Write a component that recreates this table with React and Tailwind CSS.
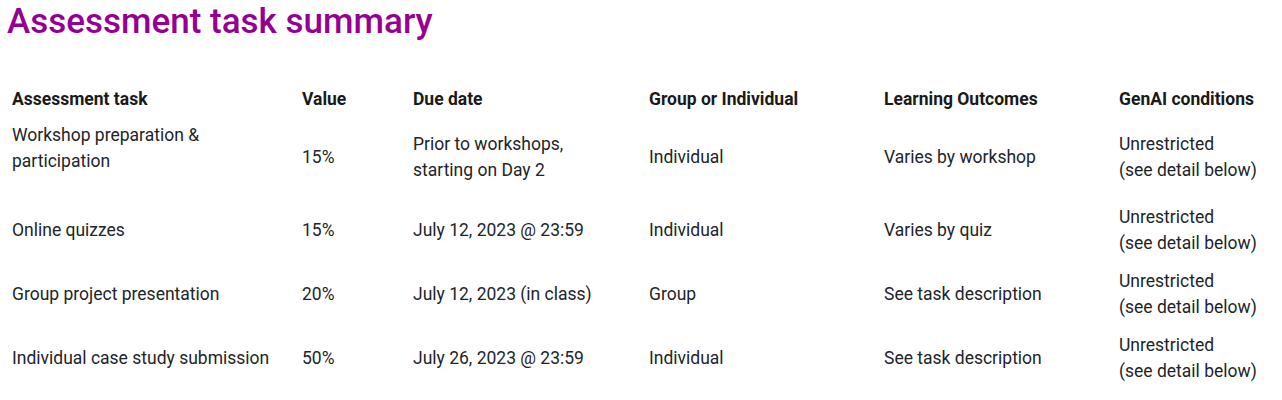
const rows = [
  {
    task: "Workshop preparation & participation",
    value: "15%",
    due: "Prior to workshops, starting on Day 2",
    type: "Individual",
    outcomes: "Varies by workshop",
    first: true,
  },
  {
    task: "Online quizzes",
    value: "15%",
    due: "July 12, 2023 @ 23:59",
    type: "Individual",
    outcomes: "Varies by quiz",
  },
  {
    task: "Group project presentation",
    value: "20%",
    due: "July 12, 2023 (in class)",
    type: "Group",
    outcomes: "See task description",
  },
  {
    task: "Individual case study submission",
    value: "50%",
    due: "July 26, 2023 @ 23:59",
    type: "Individual",
    outcomes: "See task description",
  },
];

const headers = [
  "Assessment task",
  "Value",
  "Due date",
  "Group or Individual",
  "Learning Outcomes",
  "GenAI conditions",
];

export default function App() {
  return (
    <div className="w-[1282px] h-[400px] overflow-hidden bg-white font-['Roboto',sans-serif] text-[#212529]">
      <h1 className="pl-[7px] text-[35px] leading-[44px] font-medium text-[#960092]">
        Assessment task summary
      </h1>
      <table className="mt-[38px] w-[1282px] table-fixed border-collapse text-[17.5px] leading-[26.5px]">
        <colgroup>
          <col className="w-[290px]" />
          <col className="w-[111px]" />
          <col className="w-[236px]" />
          <col className="w-[235px]" />
          <col className="w-[235px]" />
          <col className="w-[175px]" />
        </colgroup>
        <thead>
          <tr className="h-[34px]">
            {headers.map((h) => (
              <th key={h} className="pl-3 text-left align-middle font-bold text-[#1a1a1a]">
                {h}
              </th>
            ))}
          </tr>
        </thead>
        <tbody>
          {rows.map((r) => (
            <tr key={r.task} className={r.first ? "h-[82px]" : "h-[64px]"}>
              <td className="pl-3 align-middle">
                <p className={r.first ? "mb-[18px]" : ""}>{r.task}</p>
              </td>
              <td className="pl-3 align-middle">{r.value}</td>
              <td className="pl-3 align-middle">
                {r.first ? (
                  <>
                    Prior to workshops,
                    <br />
                    starting on Day 2
                  </>
                ) : (
                  r.due
                )}
              </td>
              <td className="pl-3 align-middle">{r.type}</td>
              <td className="pl-3 align-middle">{r.outcomes}</td>
              <td className="pl-3 align-middle">
                Unrestricted
                <br />
                (see detail below)
              </td>
            </tr>
          ))}
        </tbody>
      </table>
    </div>
  );
}
